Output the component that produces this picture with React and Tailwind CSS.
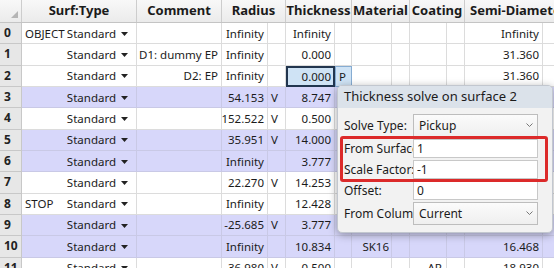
import React from 'react';

const rows = [
  { name: 'OBJECT', radius: 'Infinity', thick: 'Infinity', semi: 'Infinity' },
  { comment: 'D1: dummy EP', radius: 'Infinity', thick: '0.000', semi: '31.360' },
  { comment: 'D2: EP', radius: 'Infinity', thick: '0.000', ts: 'P', semi: '31.360', selected: true },
  { radius: '54.153', rs: 'V', thick: '8.747', hl: true },
  { radius: '152.522', rs: 'V', thick: '0.500' },
  { radius: '35.951', rs: 'V', thick: '14.000', hl: true },
  { radius: 'Infinity', thick: '3.777', hl: true },
  { radius: '22.270', rs: 'V', thick: '14.253' },
  { name: 'STOP', radius: 'Infinity', thick: '12.428' },
  { radius: '-25.685', rs: 'V', thick: '3.777', hl: true },
  { radius: 'Infinity', thick: '10.834', mat: 'SK16', semi: '16.468', hl: true },
  { radius: '36.980', rs: 'V', thick: '0.500', coat: 'AR', semi: '18.930' },
];

function Caret() {
  return (
    <svg width="7" height="4" viewBox="0 0 7 4" className="ml-[5px] mt-[1px]">
      <path d="M0 0 L7 0 L3.5 4 Z" fill="#222" />
    </svg>
  );
}

function Header() {
  const groups = [
    { label: '', w: 22 },
    { label: 'Surf:Type', w: 115 },
    { label: 'Comment', w: 85 },
    { label: 'Radius', w: 64 },
    { label: 'Thickness', w: 66 },
    { label: 'Material', w: 58 },
    { label: 'Coating', w: 55 },
    { label: 'Semi-Diameter', w: 108, left: true },
  ];
  return (
    <div className="flex h-[23px] border-b border-[#c4c4c4] bg-gradient-to-b from-[#f8f8f8] to-[#ebebeb]">
      {groups.map((g, i) => (
        <div
          key={i}
          style={{ width: g.w }}
          className={`relative flex shrink-0 items-center border-r border-[#cdcdcd] text-[13px] font-bold text-[#1b1b1b] whitespace-nowrap overflow-hidden ${g.left ? 'pl-[5px]' : 'justify-center'}`}
        >
          {i === 0 ? (
            <svg width="7" height="7" viewBox="0 0 7 7" className="absolute right-[3px] bottom-[4px]">
              <path d="M7 0 L7 7 L0 7 Z" fill="#b5b5b5" />
            </svg>
          ) : (
            g.label
          )}
        </div>
      ))}
    </div>
  );
}

function Row({ r, idx }) {
  const bg = r.hl ? 'bg-[#d7d7fa]' : 'bg-white';
  const line = r.hl ? 'border-[#c9c9e6]' : 'border-[#dcdcdc]';
  return (
    <div className={`flex h-[21.33px] ${bg}`}>
      <div className="flex w-[22px] shrink-0 items-center border-r border-b border-[#c8c8c8] bg-[#e7e7e7] pl-[4px] text-[12px] font-bold text-[#222]">
        {idx}
      </div>
      <div className={`flex w-[115px] shrink-0 items-center justify-between border-r border-b ${line} pl-[3px] pr-[8px]`}>
        <span>{r.name || ''}</span>
        <span className="flex items-center">
          Standard
          <Caret />
        </span>
      </div>
      <div className={`flex w-[85px] shrink-0 items-center justify-end border-r border-b ${line} pr-[3px] whitespace-nowrap`}>
        {r.comment || ''}
      </div>
      <div className={`flex w-[46px] shrink-0 items-center justify-end border-r border-b ${line} pr-[3px]`}>
        {r.radius}
      </div>
      <div className={`flex w-[18px] shrink-0 items-center border-r border-b ${line} pl-[3px]`}>
        {r.rs || ''}
      </div>
      {r.selected ? (
        <>
          <div className="flex w-[49px] shrink-0 items-center justify-end border-2 border-[#22364f] bg-[#cfe3f5] pr-[2px]">
            {r.thick}
          </div>
          <div className="flex w-[17px] shrink-0 items-center border border-[#86acd2] bg-[#cfe3f5] pl-[3px]">
            {r.ts}
          </div>
        </>
      ) : (
        <>
          <div className={`flex w-[49px] shrink-0 items-center justify-end border-r border-b ${line} pr-[3px]`}>
            {r.thick}
          </div>
          <div className={`flex w-[17px] shrink-0 items-center border-r border-b ${line}`} />
        </>
      )}
      <div className={`flex w-[40px] shrink-0 items-center justify-end border-r border-b ${line} pr-[2px]`}>
        {r.mat || ''}
      </div>
      <div className={`w-[18px] shrink-0 border-r border-b ${line}`} />
      <div className={`flex w-[37px] shrink-0 items-center justify-end border-r border-b ${line} pr-[4px]`}>
        {r.coat || ''}
      </div>
      <div className={`w-[18px] shrink-0 border-r border-b ${line}`} />
      <div className={`flex w-[78px] shrink-0 items-center justify-end border-r border-b ${line} pr-[3px]`}>
        {r.semi || ''}
      </div>
      <div className={`w-[30px] shrink-0 border-b ${line}`} />
    </div>
  );
}

function Field({ label, value, select }) {
  return (
    <div className="flex items-center">
      <div className="w-[75px] shrink-0 overflow-hidden whitespace-nowrap pl-[6px] pr-[2px] text-[12px] text-[#1b1b1b]">
        {label}
      </div>
      {select ? (
        <div className="flex h-[23px] w-[125px] items-center justify-between border border-[#bdbdbd] bg-gradient-to-b from-[#fbfbfb] to-[#efefef] pl-[5px] pr-[4px] text-[12px]">
          <span>{value}</span>
          <svg width="7" height="5" viewBox="0 0 7 5">
            <path d="M0.5 0.5 L3.5 3.5 L6.5 0.5" stroke="#777" strokeWidth="1" fill="none" />
          </svg>
        </div>
      ) : (
        <div className="flex h-[19px] w-[125px] items-center border border-[#c8c8c8] bg-white pl-[3px] text-[12px]">
          {value}
        </div>
      )}
    </div>
  );
}

function SolveDialog() {
  return (
    <div className="absolute left-[337px] top-[85px] h-[148px] w-[216px] overflow-hidden rounded-[5px] border border-[#c2c7cf] bg-[#f2f2f2] shadow-[0_2px_8px_rgba(0,0,0,0.35)]">
      <div className="flex h-[22px] items-center bg-[#dbe2ea] pl-[6px] text-[13px] text-[#1b1b1b]">
        Thickness solve on surface 2
      </div>
      <div className="flex flex-col gap-[2px] pt-[6px]">
        <Field label="Solve Type:" value="Pickup" select />
        <Field label="From Surface" value="1" />
        <Field label="Scale Factor:" value="-1" />
        <Field label="Offset:" value="0" />
        <Field label="From Column" value="Current" select />
      </div>
      {/* red annotation box */}
      <div className="pointer-events-none absolute left-[2px] top-[50px] h-[46px] w-[208px] rounded-[3px] border-[3px] border-[#dc2a2a]" />
    </div>
  );
}

export default function App() {
  return (
    <div
      className="relative h-[268px] w-[554px] overflow-hidden bg-white text-[11.5px] text-[#1b1b1b]"
      style={{ fontFamily: '"Noto Sans", "Open Sans", sans-serif' }}
    >
      <div className="w-[570px]">
        <Header />
        {rows.map((r, i) => (
          <Row key={i} r={r} idx={i} />
        ))}
      </div>
      <SolveDialog />
    </div>
  );
}
